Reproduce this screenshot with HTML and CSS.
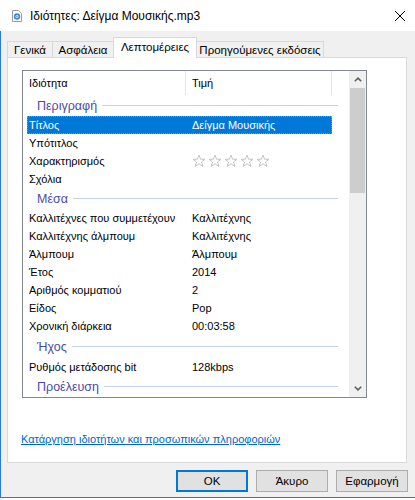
FILE: index.html
```html
<!DOCTYPE html>
<html lang="el">
<head>
<meta charset="utf-8">
<title>Ιδιότητες</title>
<link rel="stylesheet" href="styles.css">
</head>
<body>
<div class="titlebar">
  <svg class="ticon" width="10" height="12" viewBox="0 0 10 12">
    <path d="M0.5 0.5 H6.5 L9.5 3.5 V11.5 H0.5 Z" fill="#fff" stroke="#9a9a9a"/>
    <circle cx="5" cy="6.5" r="3.2" fill="#3f86d8"/>
    <circle cx="5" cy="6.5" r="1.6" fill="#cfe3f7"/>
    <circle cx="5" cy="6.5" r="0.6" fill="#2a6cc0"/>
  </svg>
  <span class="title">Ιδιότητες: Δείγμα Μουσικής.mp3</span>
  <svg class="close" width="10" height="10" viewBox="0 0 10 10">
    <path d="M0 0 L10 10 M10 0 L0 10" stroke="#000" stroke-width="1"/>
  </svg>
</div>
<div class="client">
  <div class="tabs">
    <div class="tab t1">Γενικά</div>
    <div class="tab t2">Ασφάλεια</div>
    <div class="tab t3 active">Λεπτομέρειες</div>
    <div class="tab t4">Προηγούμενες εκδόσεις</div>
  </div>
  <div class="panel">
    <div class="list">
      <div class="list-body">
        <div class="header">
          <div class="hcell c1">Ιδιότητα</div>
          <div class="hcell c2">Τιμή</div>
        </div>
        <div class="group"><span>Περιγραφή</span></div>
        <div class="row selected"><span class="k">Τίτλος</span><span class="v">Δείγμα Μουσικής</span></div>
        <div class="row"><span class="k">Υπότιτλος</span><span class="v"></span></div>
        <div class="row"><span class="k">Χαρακτηρισμός</span><span class="v stars">
          <svg class="star" width="14" height="14" viewBox="0 0 14 14"><path d="M7 1 L8.6 5.2 L13 5.3 L9.5 8 L10.8 12.4 L7 9.8 L3.2 12.4 L4.5 8 L1 5.3 L5.4 5.2 Z" fill="none" stroke="#c4c4c4"/></svg>
          <svg class="star" width="14" height="14" viewBox="0 0 14 14"><path d="M7 1 L8.6 5.2 L13 5.3 L9.5 8 L10.8 12.4 L7 9.8 L3.2 12.4 L4.5 8 L1 5.3 L5.4 5.2 Z" fill="none" stroke="#c4c4c4"/></svg>
          <svg class="star" width="14" height="14" viewBox="0 0 14 14"><path d="M7 1 L8.6 5.2 L13 5.3 L9.5 8 L10.8 12.4 L7 9.8 L3.2 12.4 L4.5 8 L1 5.3 L5.4 5.2 Z" fill="none" stroke="#c4c4c4"/></svg>
          <svg class="star" width="14" height="14" viewBox="0 0 14 14"><path d="M7 1 L8.6 5.2 L13 5.3 L9.5 8 L10.8 12.4 L7 9.8 L3.2 12.4 L4.5 8 L1 5.3 L5.4 5.2 Z" fill="none" stroke="#c4c4c4"/></svg>
          <svg class="star" width="14" height="14" viewBox="0 0 14 14"><path d="M7 1 L8.6 5.2 L13 5.3 L9.5 8 L10.8 12.4 L7 9.8 L3.2 12.4 L4.5 8 L1 5.3 L5.4 5.2 Z" fill="none" stroke="#c4c4c4"/></svg>
        </span></div>
        <div class="row"><span class="k">Σχόλια</span><span class="v"></span></div>
        <div class="group"><span>Μέσα</span></div>
        <div class="row"><span class="k">Καλλιτέχνες που συμμετέχουν</span><span class="v">Καλλιτέχνης</span></div>
        <div class="row"><span class="k">Καλλιτέχνης άλμπουμ</span><span class="v">Καλλιτέχνης</span></div>
        <div class="row"><span class="k">Άλμπουμ</span><span class="v">Άλμπουμ</span></div>
        <div class="row"><span class="k">Έτος</span><span class="v">2014</span></div>
        <div class="row"><span class="k">Αριθμός κομματιού</span><span class="v">2</span></div>
        <div class="row"><span class="k">Είδος</span><span class="v">Pop</span></div>
        <div class="row"><span class="k">Χρονική διάρκεια</span><span class="v">00:03:58</span></div>
        <div class="group g-tall"><span>Ήχος</span></div>
        <div class="row"><span class="k">Ρυθμός μετάδοσης bit</span><span class="v">128kbps</span></div>
        <div class="group"><span>Προέλευση</span></div>
      </div>
      <div class="scrollbar">
        <div class="arrow">
          <svg width="8" height="5" viewBox="0 0 8 5"><path d="M0.8 4.3 L4 1.1 L7.2 4.3" fill="none" stroke="#606060" stroke-width="1.6"/></svg>
        </div>
        <div class="thumb"></div>
        <div class="track"></div>
        <div class="arrow">
          <svg width="8" height="5" viewBox="0 0 8 5"><path d="M0.8 0.7 L4 3.9 L7.2 0.7" fill="none" stroke="#606060" stroke-width="1.6"/></svg>
        </div>
      </div>
    </div>
    <a class="link" href="#">Κατάργηση ιδιοτήτων και προσωπικών πληροφοριών</a>
  </div>
  <div class="buttons">
    <div class="btn default">OK</div>
    <div class="btn">Άκυρο</div>
    <div class="btn">Εφαρμογή</div>
  </div>
</div>
</body>
</html>
```

FILE: styles.css
```css
* { box-sizing: border-box; }

html, body {
  margin: 0;
  padding: 0;
}

body {
  width: 415px;
  height: 500px;
  overflow: hidden;
  background: #ffffff;
  font-family: "Liberation Sans", Arial, sans-serif;
  font-size: 11px;
  color: #000;
}

.titlebar {
  height: 31px;
  background: #ffffff;
  display: flex;
  align-items: center;
}

.ticon {
  margin-left: 12px;
  flex: none;
}

.title {
  margin-left: 8px;
  font-size: 12px;
  color: #000;
}

.close {
  margin-left: auto;
  margin-right: 10px;
  flex: none;
}

.client {
  height: 467px;
  background: #f0f0f0;
  border-left: 1px solid #2a7ad6;
  border-bottom: 1px solid #2a7ad6;
  padding-left: 6px;
}

.tabs {
  display: flex;
  align-items: flex-end;
  padding-top: 6px;
  height: 26px;
  position: relative;
  z-index: 2;
}

.tab {
  height: 16px;
  border: 1px solid #d9d9d9;
  border-bottom: none;
  margin-right: -1px;
  background: #f0f0f0;
  display: flex;
  align-items: center;
  justify-content: center;
  white-space: nowrap;
  font-size: 11.5px;
  line-height: 14px;
}

.tab.active {
  height: 21px;
  margin-bottom: -1px;
  background: #ffffff;
  position: relative;
  z-index: 3;
  padding-bottom: 2px;
}

.t1 { width: 46px; }
.t2 { width: 62px; }
.t3 { width: 84px; }
.t4 { width: 128px; }

.panel {
  width: 400px;
  height: 406px;
  background: #ffffff;
  border: 1px solid #d9d9d9;
  position: relative;
  z-index: 1;
}

.list {
  margin: 12px 0 0 14px;
  width: 345px;
  height: 328px;
  border: 1px solid #828790;
  display: flex;
}

.list-body {
  flex: 1;
  overflow: hidden;
  background: #fff;
}

.header {
  display: flex;
  height: 24px;
}

.hcell {
  height: 24px;
  display: flex;
  align-items: center;
  padding-left: 6px;
  border-right: 1px solid #e5e5e5;
}

.c1 { width: 163px; }
.c2 { width: 146px; }

.group {
  height: 21px;
  display: flex;
  align-items: center;
  padding-left: 14px;
  padding-right: 11px;
  color: #4b4aa8;
  font-size: 12.5px;
}

.group.g-tall { height: 23px; }

.group::after {
  content: "";
  flex: 1;
  height: 1px;
  background: #c7d3ec;
  margin-left: 5px;
  margin-top: -1px;
}

.row {
  height: 18px;
  margin-left: 4px;
  width: 305px;
  display: flex;
  align-items: center;
  padding-left: 2px;
  white-space: nowrap;
}

.row.selected {
  background: #0078d7;
  color: #fff;
  outline: 1px dotted #b98a4a;
  outline-offset: -1px;
}

.k { width: 163px; flex: none; }
.v { flex: 1; }

.stars {
  display: flex;
  gap: 2px;
  align-items: center;
}

.star { display: block; }

.scrollbar {
  width: 17px;
  flex: none;
  background: #f0f0f0;
  display: flex;
  flex-direction: column;
}

.arrow {
  height: 17px;
  flex: none;
  display: flex;
  align-items: center;
  justify-content: center;
}

.thumb {
  height: 105px;
  margin: 0 1px;
  background: #cdcdcd;
  flex: none;
}

.track { flex: 1; }

.link {
  display: block;
  margin: 34px 0 0 13px;
  width: max-content;
  color: #0066cc;
  text-decoration: underline;
  line-height: 15px;
}

.buttons {
  display: flex;
  justify-content: flex-end;
  gap: 8px;
  margin-top: 7px;
  padding-right: 7px;
}

.btn {
  width: 72px;
  height: 22px;
  background: #e1e1e1;
  border: 1px solid #adadad;
  display: flex;
  align-items: center;
  justify-content: center;
  font-size: 11.5px;
}

.btn.default {
  border-color: #0078d7;
  box-shadow: inset 0 0 0 1px #0078d7;
}
```
